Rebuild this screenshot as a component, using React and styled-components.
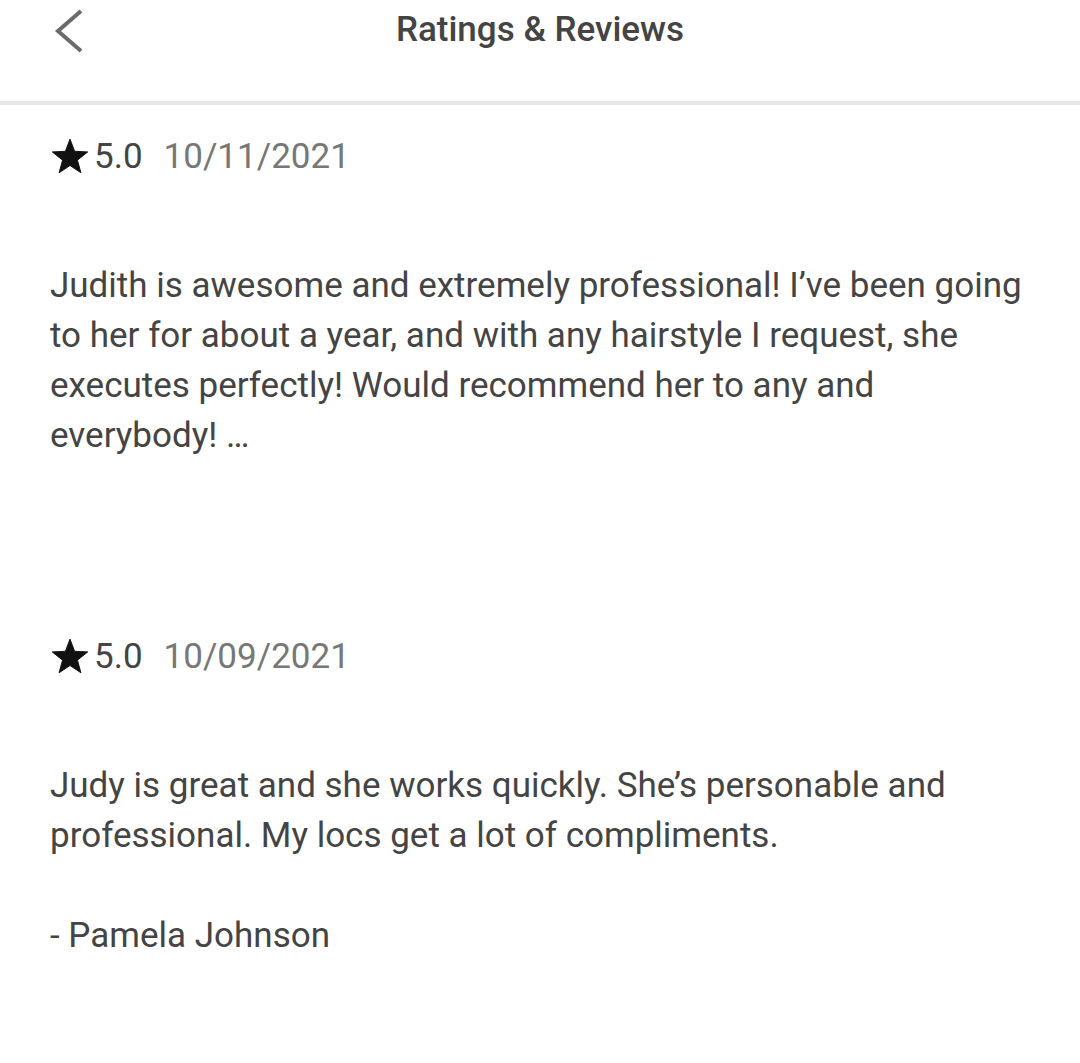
import React from 'react';
import styled, { createGlobalStyle } from 'styled-components';

const GlobalStyle = createGlobalStyle`
  html, body {
    margin: 0;
    padding: 0;
    background: #ffffff;
  }
  body {
    font-family: Roboto, "Liberation Sans", Arial, sans-serif;
    color: #444444;
  }
`

const Page = styled.div`
  width: 1080px;
  min-height: 1063px;
  background: #fff;
`

const Header = styled.div`
  height: 101px;
  border-bottom: 4px solid #e6e6e6;
  display: grid;
  grid-template-columns: 120px 1fr 120px;
  align-items: start;
`

const BackButton = styled.button`
  border: none;
  background: none;
  padding: 0;
  margin: 8px 0 0 52px;
  width: 34px;
  height: 46px;
  cursor: pointer;
`

const Title = styled.h1`
  margin: 0;
  padding-top: 8px;
  text-align: center;
  font-size: 35px;
  line-height: 44px;
  font-weight: 500;
  color: #444;
`

const ReviewList = styled.div`
  padding: 26px 50px 0 50px;
  display: flex;
  flex-direction: column;
  gap: 170px;
`

const Review = styled.div`
  display: flex;
  flex-direction: column;
  gap: 80px;
`

const RatingRow = styled.div`
  display: flex;
  align-items: center;
  height: 50px;
  font-size: 35px;
`

const Score = styled.span`
  color: #444;
  margin-left: 5px;
`

const DateText = styled.span`
  color: #777;
  margin-left: 21px;
`

const Body = styled.p`
  margin: 0;
  font-size: 35px;
  line-height: 50px;
  color: #444;
  white-space: pre-line;
`

// solid five-point star used for the score
const Star = () => (
  <svg width="38" height="37" viewBox="0 0 24 23" style={{ marginLeft: '1px' }}>
    <polygon
      fill="#111"
      stroke="#111"
      strokeWidth="0.6"
      strokeLinejoin="round"
      points="12,0.5 14.9,8.2 23.2,8.6 16.7,13.8 18.9,21.8 12,17.2 5.1,21.8 7.3,13.8 0.8,8.6 9.1,8.2"
    />
  </svg>
)

const reviews = [
  {
    score: '5.0',
    date: '10/11/2021',
    text: 'Judith is awesome and extremely professional! I\u2019ve been going to her for about a year, and with any hairstyle I request, she executes perfectly! Would recommend her to any and everybody! \u2026',
  },
  {
    score: '5.0',
    date: '10/09/2021',
    text: 'Judy is great and she works quickly. She\u2019s personable and professional. My locs get a lot of compliments.\n\n- Pamela Johnson',
  },
]

export default function App() {
  return (
    <Page>
      <GlobalStyle />
      <Header>
        <BackButton aria-label="Back">
          <svg width="34" height="46" viewBox="0 0 34 46">
            <polyline points="29,3 6,23 29,43" fill="none" stroke="#6b6b6b" strokeWidth="4" />
          </svg>
        </BackButton>
        <Title>Ratings &amp; Reviews</Title>
        <div />
      </Header>
      <ReviewList>
        {reviews.map((r) => (
          <Review key={r.date}>
            <RatingRow>
              <Star />
              <Score>{r.score}</Score>
              <DateText>{r.date}</DateText>
            </RatingRow>
            <Body>{r.text}</Body>
          </Review>
        ))}
      </ReviewList>
    </Page>
  )
}
